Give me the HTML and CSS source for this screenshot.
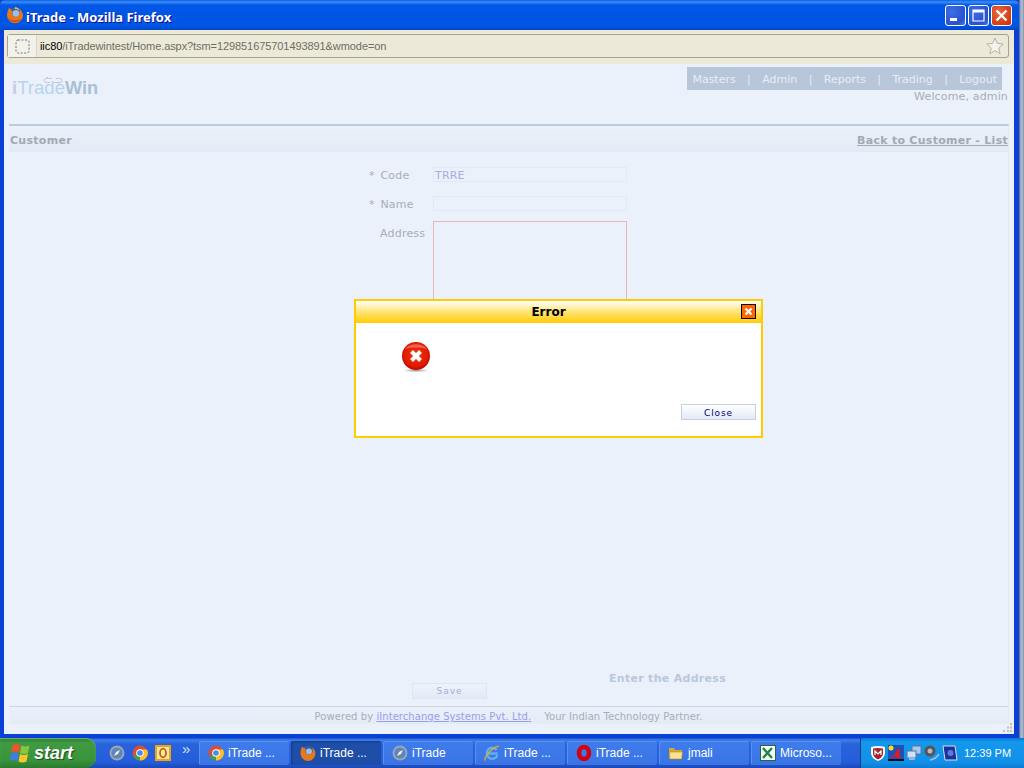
FILE: index.html
```html
<!DOCTYPE html>
<html lang="en">
<head>
<meta charset="utf-8">
<title>iTrade - Mozilla Firefox</title>
<link rel="stylesheet" href="styles.css">
</head>
<body>
<div class="window">
  <header class="titlebar">
    <svg class="fx" width="18" height="18" viewBox="0 0 18 18"><circle cx="9" cy="9" r="7.500" fill="#2f5f9e"/><circle cx="10" cy="7.500" r="3.600" fill="#9dbde6"/><path d="M3 1.500c-.5 2-2 4-2 7.500a8 8 0 0 0 16 .5c0-3-2-6-4.500-7 1.800 2 2 4.500.8 6.200-1 1.800-3.800 2.500-5.800 1.500C5.500 9 5.300 6.500 7 5 5.300 5 4.800 4.300 5.300 3 4.300 3.300 3.500 2.800 3 1.500z" fill="#e8761a"/><path d="M9.500 .8c1.300 1 3.800 1.400 3.800 3.200-1.200-.8-3-1.200-4.800-1.100z" fill="#f6b73c"/><path d="M2 12a8 8 0 0 0 14 0c-3 3-10 3.500-14 0z" fill="#c9481c"/></svg>
    <span class="title-text">iTrade - Mozilla Firefox</span>
    <div class="caption-btns">
      <button class="cap"><svg width="21" height="21" viewBox="0 0 21 21"><rect x="5" y="13" width="7" height="3" fill="#fff"/></svg></button>
      <button class="cap"><svg width="21" height="21" viewBox="0 0 21 21"><path d="M5 5h11v11H5z" fill="none" stroke="#fff" stroke-width="1.200"/><rect x="5" y="5" width="11" height="2.500" fill="#fff"/></svg></button>
      <button class="cap cap-close"><svg width="21" height="21" viewBox="0 0 21 21"><path d="M5.500 5.500l10 10M15.500 5.500l-10 10" stroke="#fff" stroke-width="2.400"/></svg></button>
    </div>
  </header>
  <div class="toolbar">
    <div class="urlbar">
      <span class="site-btn"><svg width="15" height="15" viewBox="0 0 15 15"><rect x="1" y="1" width="13" height="13" rx="2" fill="none" stroke="#777" stroke-dasharray="2 1.500"/></svg></span>
      <span class="url"><b>iic80</b>/iTradewintest/Home.aspx?tsm=129851675701493891&amp;wmode=on</span>
      <svg class="star" width="18" height="18" viewBox="0 0 18 18"><path d="M9 1l2.400 5.400 5.800.6-4.400 3.900 1.300 5.800L9 13.700 3.900 16.700l1.300-5.800L.8 7l5.800-.6z" fill="#f4f2ea" stroke="#b5b3a8"/></svg>
    </div>
  </div>
  <main class="page">
    <div class="top">
      <div class="logo">
        <svg class="logo-arrows" width="20" height="9" viewBox="0 0 20 9"><path d="M9 2.500H3a2 2 0 0 0 0 4h4M5 1l-2 1.500M11 6.500h6a2 2 0 0 0 0-4h-4M15 8l2-1.500" fill="none" stroke="#cfc4e0"/></svg>
        <span class="logo-i">i</span><span class="logo-t">Trade</span><span class="logo-w">Win</span>
      </div>
      <div class="top-right">
        <nav class="nav"><span>Masters</span><i>|</i><span>Admin</span><i>|</i><span>Reports</span><i>|</i><span>Trading</span><i>|</i><span>Logout</span></nav>
        <div class="welcome">Welcome, admin</div>
      </div>
    </div>
    <section class="panel">
      <div class="panel-head"><span>Customer</span><a>Back to Customer - List</a></div>
      <div class="form">
        <label class="star-l">* Code</label><div class="inp val">TRRE</div>
        <label class="star-l">* Name</label><div class="inp"></div>
        <label>Address</label><div class="area"></div>
      </div>
      <div class="actions">
        <div class="hint">Enter the Address</div>
        <div class="save">Save</div>
      </div>
      <footer class="foot">Powered by <a>iInterchange Systems Pvt. Ltd.</a><span class="tag">Your Indian Technology Partner.</span></footer>
    </section>
    <svg class="grip" width="10" height="10" viewBox="0 0 10 10"><path d="M7 0h2v2H7zM4 3.500h2v2H4zM7 3.500h2v2H7zM0 7h2v2H0zM4 7h2v2H4zM7 7h2v2H7z" fill="#c4c0b0"/></svg>
    <div class="dialog">
      <div class="dlg-title"><b>Error</b><span class="dlg-x"><svg width="9" height="9" viewBox="0 0 9 9"><path d="M1.500 1.500l6 6M7.500 1.500l-6 6" stroke="#fff" stroke-width="2.200"/></svg></span></div>
      <div class="dlg-body">
        <svg class="err" width="30" height="32" viewBox="0 0 30 32">
          <defs>
            <radialGradient id="r" cx=".5" cy=".45" r=".55"><stop offset="0" stop-color="#f03a10"/><stop offset=".8" stop-color="#e01800"/><stop offset="1" stop-color="#b00c00"/></radialGradient>
            <radialGradient id="s"><stop offset="0" stop-color="#999"/><stop offset="1" stop-color="#fff"/></radialGradient>
          </defs>
          <ellipse cx="15" cy="29.500" rx="13" ry="2" fill="url(#s)"/>
          <circle cx="15" cy="15" r="14" fill="url(#r)"/>
          <path d="M4 8a12 8 0 0 1 22 0a20 8 0 0 0-22 0z" fill="#fff" opacity=".3"/>
          <path d="M10.500 10.500l9 9M19.500 10.500l-9 9" stroke="#fff" stroke-width="4"/>
        </svg>
        <div class="close-btn">Close</div>
      </div>
    </div>
  </main>
</div>
<div class="taskbar">
  <div class="start">
    <svg width="20" height="20" viewBox="0 0 20 20"><path d="M2.500 2q4-2 8 0l-1.500 7.500q-4-2-8 0z" fill="#e8562a"/><path d="M11.500 2.500q4 2 8 0L18 10q-4 2-8 0z" fill="#8ac640"/><path d="M1 10.500q4-2 8 0L7.500 18q-4-2-8 0z" fill="#3f7de0"/><path d="M10 11q4 2 8 0l-1.500 7.500q-4 2-8 0z" fill="#fbc72e"/></svg>
    <span>start</span>
  </div>
  <div class="quick">
    <svg width="16" height="16" viewBox="0 0 16 16"><circle cx="8" cy="8" r="7.500" fill="#9aa6b4"/><circle cx="8" cy="8" r="5.500" fill="#5d86b8"/><path d="M11 5L9 9 5 11l2-4z" fill="#f2f2f2"/></svg>
    <svg width="16" height="16" viewBox="0 0 16 16"><circle cx="8" cy="8" r="7.500" fill="#dd4b39"/><path d="M8 8L1.500 11A7.500 7.500 0 0 0 8 15.500z" fill="#3ea04f"/><path d="M8 4.500h7A7.500 7.500 0 0 1 8 15.500L8 8z" fill="#fbc02d"/><circle cx="8" cy="8" r="3.800" fill="#fff"/><circle cx="8" cy="8" r="2.800" fill="#4a8be8"/></svg>
    <svg width="16" height="16" viewBox="0 0 16 16"><rect width="16" height="16" fill="#f0a010"/><rect x="2" y="2" width="12" height="12" fill="#fde4a8"/><ellipse cx="8" cy="8" rx="3" ry="4.300" fill="none" stroke="#b56a00" stroke-width="1.800"/></svg>
    <span class="chev">»</span>
  </div>
  <div class="tasks">
    <div class="task"><svg width="16" height="16" viewBox="0 0 16 16"><circle cx="8" cy="8" r="7.500" fill="#dd4b39"/><path d="M8 8L1.500 11A7.500 7.500 0 0 0 8 15.500z" fill="#3ea04f"/><path d="M8 4.500h7A7.500 7.500 0 0 1 8 15.500L8 8z" fill="#fbc02d"/><circle cx="8" cy="8" r="3.800" fill="#fff"/><circle cx="8" cy="8" r="2.800" fill="#4a8be8"/></svg><span>iTrade ...</span></div>
    <div class="task active"><svg width="16" height="16" viewBox="0 0 16 16"><circle cx="8" cy="8" r="7" fill="#2f5f9e"/><circle cx="9" cy="6.500" r="3" fill="#9dbde6"/><path d="M2 1.500c-.5 2-1.500 3.500-1.500 7a7.500 7.500 0 0 0 15 0c0-3-2-5-3.500-6 1 2 1 4 0 5.300C11 9.500 8.500 10 7 9 5 8 5 6 6.500 4.500 5 4.500 4.500 4 5 3 4 3 2.800 3 2 1.500z" fill="#e8761a"/></svg><span>iTrade ...</span></div>
    <div class="task"><svg width="16" height="16" viewBox="0 0 16 16"><circle cx="8" cy="8" r="7.500" fill="#9aa6b4"/><circle cx="8" cy="8" r="5.500" fill="#5d86b8"/><path d="M11 5L9 9 5 11l2-4z" fill="#f2f2f2"/></svg><span>iTrade</span></div>
    <div class="task"><svg width="16" height="16" viewBox="0 0 16 16"><path d="M13.500 10a5.500 5.500 0 1 1-.8-5M3.500 8.500h10" fill="none" stroke="#5fb2f0" stroke-width="2.300"/><path d="M1 15.500C.5 12 7 3 15 .8" fill="none" stroke="#e8a82a" stroke-width="1.400"/></svg><span>iTrade ...</span></div>
    <div class="task"><svg width="16" height="16" viewBox="0 0 16 16"><ellipse cx="8" cy="8" rx="5" ry="6" fill="none" stroke="#d3000f" stroke-width="4.500"/></svg><span>iTrade ...</span></div>
    <div class="task"><svg width="16" height="16" viewBox="0 0 16 16"><path d="M1 3h5l1 2h7v9H1z" fill="#d8a92e"/><path d="M1.500 7h13l-1 7H2z" fill="#fbe28d" stroke="#b98a1c" stroke-width=".6"/></svg><span>jmali</span></div>
    <div class="task"><svg width="16" height="16" viewBox="0 0 16 16"><rect x=".5" y=".5" width="15" height="15" fill="#fff" stroke="#1f6e3a"/><path d="M3 3l9 10M12 3L3 13" stroke="#1f8a42" stroke-width="2.600"/></svg><span>Microso...</span></div>
  </div>
  <div class="tray">
    <svg width="16" height="16" viewBox="0 0 16 16"><path d="M1 2q7-2 14 0v6q0 5-7 8-7-3-7-8z" fill="#fff"/><path d="M3 3.500q5-1 10 0v5q0 3.500-5 6-5-2.500-5-6z" fill="#a82230"/><path d="M5 10V6l3 3 3-3v4" fill="none" stroke="#fff" stroke-width="1.200"/></svg>
    <svg width="16" height="16" viewBox="0 0 16 16"><rect width="16" height="16" fill="#1f4fb8"/><circle cx="3" cy="3" r="2.500" fill="#f7e017"/><path d="M3 13l4-4 2-4 3-2-1 5 2 5H9L7 11l-2 2z" fill="#e81818"/><rect y="14" width="16" height="2" fill="#111"/></svg>
    <svg width="16" height="16" viewBox="0 0 16 16"><rect x="6" y="1" width="9" height="8" fill="#a9c8ee" stroke="#5577aa"/><rect x="1" y="6" width="9" height="7" fill="#cfe0f6" stroke="#5577aa"/><path d="M3 14h6" stroke="#eef"/></svg>
    <svg width="16" height="16" viewBox="0 0 16 16"><circle cx="6" cy="6" r="5.500" fill="#555"/><circle cx="6" cy="6" r="2.500" fill="#bbb"/><path d="M6 15q6-1 9-6" fill="none" stroke="#9fc0ea" stroke-width="1.500"/></svg>
    <svg width="16" height="16" viewBox="0 0 16 16"><path d="M1 1h12l2 14H3z" fill="#1b2f9e" stroke="#d8e0f0"/><circle cx="8.500" cy="8" r="3" fill="#5a7ce0"/></svg>
    <time>12:39 PM</time>
  </div>
</div>
</body>
</html>
```
FILE: styles.css
```css
* { box-sizing: border-box; }
html, body { margin: 0; padding: 0; height: 768px; overflow: hidden; }
body { width: 1024px; font-family: "DejaVu Sans", sans-serif; background: linear-gradient(90deg, #39507f 1019px, #8d9cb8 1020px, #b4c0d4 1022px, #7f8ea8 1024px); }
.window {
  height: 738px; display: flex; flex-direction: column;
  margin-right: 5px; background: #0a40d8;
  padding: 0 5px 4px 4px;
}
.titlebar {
  height: 30px; flex: none; margin: 0 -5px 0 -4px; padding: 0 7px 0 6px;
  display: flex; align-items: center; gap: 2px; border-radius: 5px 5px 0 0;
  background: linear-gradient(#0a5ee8 0, #3c8cf6 2px, #0058e6 5px, #0054e3 14px, #0056e6 26px, #0046c8 30px);
}
.title-text { color: #fff; font: bold 13px "Noto Sans", sans-serif; text-shadow: 1px 1px 0 #0f1089; flex: 1; padding-top: 3px; }
.fx { flex: none; }
.caption-btns { display: flex; gap: 2px; align-items: center; }
.cap {
  width: 21px; height: 21px; padding: 0; display: block; border: 1px solid #fff; border-radius: 3px;
  background: radial-gradient(circle at 30% 30%, #3c6fe6, #2a50d0 70%, #4a78e8);
}
.cap svg { display: block; margin: -1px; }
.cap-close { background: radial-gradient(circle at 35% 35%, #e8693f, #d43c14 70%, #c23210); }
.toolbar { height: 34px; flex: none; background: #ece9d8; padding: 4px 5px 6px 3px; }
.urlbar {
  height: 24px; display: flex; align-items: center; border: 1px solid #a5a28f; border-radius: 3px;
  background: #ece9d8;
}
.site-btn { width: 29px; height: 22px; background: #f2f1ea; border-right: 1px solid #d8d5c6; display: flex; align-items: center; justify-content: center; flex: none; }
.url { font: 11px "Liberation Sans", sans-serif; letter-spacing: -.08px; color: #6e6e66; margin-left: 3px; flex: 1; white-space: nowrap; }
.url b { font-weight: normal; color: #000; }
.star { margin-right: 4px; }
.page { position: relative; flex: 1; background: #eaf1fa; min-height: 0; display: flex; flex-direction: column; padding: 3px 5px 10px 5px; }
.top { height: 57px; flex: none; display: flex; justify-content: space-between; }
.logo { position: relative; margin: 9px 0 0 3px; font: 18.600px/24px "Liberation Sans", sans-serif; white-space: nowrap; height: 24px; }
.logo-arrows { position: absolute; left: 31px; top: 0; }
.logo-i { color: #c6cce4; font-weight: bold; }
.logo-t { color: #b6d4f0; }
.logo-w { color: #a9bfd6; font-weight: bold; font-size: 18.200px; }
.top-right { display: flex; flex-direction: column; align-items: flex-end; font-size: 11px; padding-right: 1px; }
.nav { height: 23px; display: flex; align-items: center; background: #b8c6da; color: #e6edf6; padding: 1px 5px 0; margin-right: 6px; }
.nav i { font-style: normal; margin: 0 11.400px; }
.welcome { color: #a8aeb6; line-height: 13px; letter-spacing: .15px; }
.panel { flex: 1; min-height: 0; display: flex; flex-direction: column; border-top: 2px solid #bccbdd; border-right: 1px solid #e2e9f3; }
.panel-head {
  height: 26px; flex: none; display: flex; justify-content: space-between; align-items: center;
  padding: 3px 0 0 1px; font-weight: bold; font-size: 11px; color: #a3a9b1; letter-spacing: .28px;
  background: linear-gradient(#eaf1fa, #e3ebf6); border-bottom: 1px solid #e0e8f2;
}
.panel-head a { text-decoration: underline; }
.form { display: grid; grid-template-columns: 57px 194px; column-gap: 7px; margin: 15px 0 0 360px; font-size: 11px; color: #a8aeb6; grid-auto-rows: min-content; row-gap: 13px; letter-spacing: .2px; }
.form label { padding: 1px 0 0 11px; line-height: 15px; }
.form .star-l { padding-left: 0; word-spacing: 2px; }
.inp { height: 15px; border: 1px solid #e2e9f4; padding-left: 1px; line-height: 15px; }
.val { color: #a9acdf; }
.area { grid-column: 2; height: 100px; margin-top: -4px; border: 1px solid #e7b6b6; }
.actions { flex: 1; min-height: 0; display: flex; flex-direction: column; justify-content: flex-end; margin-left: 403px; padding-bottom: 7px; }
.hint { margin-left: 197px; font-weight: bold; font-size: 11px; color: #b9c8dc; letter-spacing: .3px; line-height: 13px; margin-bottom: -2px; }
.save { width: 75px; height: 16px; border: 1px solid #dfe6f1; background: linear-gradient(#edf3fb, #e2eaf6); color: #a9acd8; font-size: 9px; line-height: 14px; text-align: center; letter-spacing: 1px; }
.foot { height: 18px; flex: none; border-top: 1px solid #cdd6e2; background: linear-gradient(#eaf1fa, #e3ebf6); text-align: center; font-size: 10px; line-height: 19px; color: #a8aeb6; letter-spacing: .06px; }
.foot a { color: #9a9dee; text-decoration: underline; }
.tag { margin-left: 13px; }
.grip { position: absolute; right: 1px; bottom: 1px; }
.dialog { position: absolute; left: 350px; top: 235px; width: 409px; height: 139px; background: #fff; border: 2px solid #ffcc00; display: flex; flex-direction: column; }
.dlg-title { height: 22px; flex: none; position: relative; background: linear-gradient(#fff, #ffe680 45%, #ffcc00); text-align: center; font-size: 12px; line-height: 23px; color: #000; padding-right: 20px; }
.dlg-x { position: absolute; right: 5px; top: 3px; width: 15px; height: 15px; background: #ff6600; border: 1px solid #000; display: flex; align-items: center; justify-content: center; }
.dlg-x svg { display: block; }
.dlg-body { flex: 1; display: flex; flex-direction: column; align-items: flex-start; padding: 18px 5px 0 45px; }
.err { flex: none; }
.close-btn { align-self: flex-end; margin-top: 31px; width: 75px; height: 16px; border: 1px solid #c8d0dc; background: linear-gradient(#fff, #e2eaf6); color: #000080; font-size: 9px; line-height: 16px; text-align: center; letter-spacing: .9px; }
.taskbar { height: 30px; display: flex; align-items: stretch; background: linear-gradient(#1f4fc0 0, #3a80ee 2px, #2a62dc 6px, #245edb 24px, #1a48b8 30px); color: #fff; font: 11px "Liberation Sans", sans-serif; }
.start { width: 96px; flex: none; display: flex; align-items: center; gap: 4px; padding-left: 10px; border-radius: 0 10px 10px 0; background: linear-gradient(#2f7a35 0, #3f9a42 5px, #39943c 22px, #2a7a2e 30px); box-shadow: inset 0 1px 1px #6fb070; }
.start span { font: italic bold 18px "Liberation Sans", sans-serif; text-shadow: 1px 1px 1px #1a4a1a; }
.quick { display: flex; align-items: center; gap: 7px; width: 103px; flex: none; padding-left: 13px; }
.chev { font-size: 15px; color: #cfe0ff; margin: -10px 0 0 4px; }
.tasks { flex: 1; display: flex; gap: 2px; align-items: center; }
.task { width: 90px; height: 24px; flex: none; display: flex; align-items: center; gap: 4px; padding-left: 9px; border-radius: 2px; background: linear-gradient(#3f7cec, #3a74e4); font-size: 12px; box-shadow: inset 1px 1px 0 #5a90f0; white-space: nowrap; }
.task.active { background: #1e4ea8; box-shadow: inset 1px 1px 2px #123a80; }
.tray { width: 164px; flex: none; display: flex; align-items: center; gap: 2px; padding-left: 9px; background: linear-gradient(#0c78d8, #1398ec 4px, #1290e8 24px, #0c7cd4); border-left: 1px solid #0a3c80; }
.tray time { margin-left: 4px; font-size: 11px; white-space: nowrap; }
```
